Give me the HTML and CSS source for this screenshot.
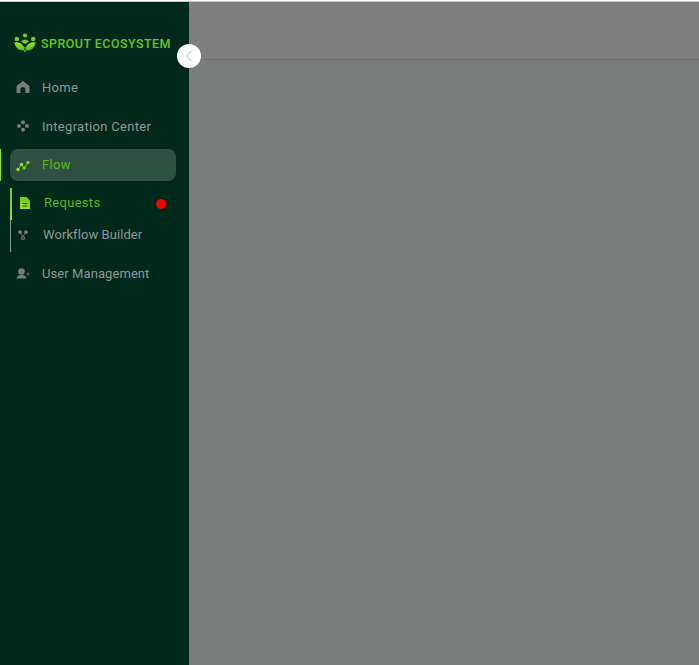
FILE: index.html
```html
<!DOCTYPE html>
<html>
<head>
  <title>Sprout Ecosystem</title>
  <link rel="stylesheet" href="styles.css">
</head>
<body>

  <div class="app">
    <div class="sidebar">
      <div class="brand">
        <svg class="brand-logo" width="22" height="20" viewBox="0 0 22 20">
          <defs>
            <linearGradient id="leaf" x1="0" y1="0" x2="0" y2="1">
              <stop offset="0" stop-color="#9be01a"/>
              <stop offset="1" stop-color="#4fc01a"/>
            </linearGradient>
            <linearGradient id="doc" x1="0" y1="0" x2="0" y2="1">
              <stop offset="0" stop-color="#5fd01c"/>
              <stop offset="1" stop-color="#a6dc10"/>
            </linearGradient>
          </defs>
          <circle cx="11" cy="2.500" r="2.100" fill="#6fd01c"/>
          <circle cx="2.800" cy="6" r="2.200" fill="#6fd01c"/>
          <circle cx="19.200" cy="6" r="2.200" fill="#6fd01c"/>
          <path d="M7 8.500 Q11 4.500 15 8.500 L11 11 Z" fill="#6fd01c"/>
          <path d="M0.300 9.500 Q7 8.500 10.500 14.500 L10.500 17.500 Q2 18 0.300 9.500 Z" fill="url(#leaf)"/>
          <path d="M21.700 9.500 Q15 8.500 11.500 14.500 L11.500 17.500 Q20 18 21.700 9.500 Z" fill="url(#leaf)"/>
          <path d="M9.500 17.300 H12.500 L11 19.800 Z" fill="#4fc01a"/>
        </svg>
        <span class="brand-name">SPROUT ECOSYSTEM</span>
      </div>

      <ul class="nav">
        <li class="nav-item">
          <svg class="icon" width="14" height="14" viewBox="0 0 14 14">
            <path d="M7 1 L13.500 6 V13 H9.500 V9.500 a2.500 2.500 0 0 0 -5 0 V13 H0.500 V6 Z" fill="#7b7b7b"/>
          </svg>
          <span>Home</span>
        </li>
        <li class="nav-item">
          <svg class="icon" width="14" height="14" viewBox="0 0 14 14" fill="#7b7b7b">
            <circle cx="7" cy="3.200" r="2"/>
            <circle cx="3" cy="7" r="2"/>
            <circle cx="11" cy="7" r="2"/>
            <circle cx="7" cy="10.800" r="2"/>
          </svg>
          <span>Integration Center</span>
        </li>
        <li class="nav-item active">
          <svg class="icon" width="14" height="14" viewBox="0 0 14 14">
            <path d="M2 11.500 L5.500 6.500 L8 10 L12 4.500" fill="none" stroke="#6fd01c" stroke-width="1"/>
            <circle cx="2" cy="11.500" r="1.700" fill="#9be01a"/>
            <circle cx="5.500" cy="6.500" r="1.700" fill="#9be01a"/>
            <circle cx="8" cy="10" r="1.700" fill="#6fd01c"/>
            <circle cx="12" cy="4.500" r="1.700" fill="#6fd01c"/>
          </svg>
          <span>Flow</span>
        </li>
      </ul>

      <ul class="subnav">
        <li class="subnav-item current">
          <svg class="icon" width="10" height="12" viewBox="0 0 10 12">
            <path d="M0 0 H6.500 L10 3.500 V12 H0 Z" fill="url(#doc)"/>
            <path d="M2.500 6 H7.500 V7 H2.500 Z M2.500 8.500 H7.500 V9.500 H2.500 Z" fill="#2c4a1a"/>
          </svg>
          <span>Requests</span>
          <i class="dot"></i>
        </li>
        <li class="subnav-item">
          <svg class="icon" width="10" height="10" viewBox="0 0 12 12" fill="#7b7b7b">
            <circle cx="2.500" cy="2.500" r="2.300"/>
            <circle cx="9.500" cy="2.500" r="2.300"/>
            <circle cx="6" cy="9.500" r="1.700" fill="none" stroke="#7b7b7b" stroke-width="1.400"/>
            <path d="M3 4 L6 7 L9 4" fill="none" stroke="#7b7b7b"/>
          </svg>
          <span class="tight">Workflow Builder</span>
        </li>
      </ul>

      <ul class="nav">
        <li class="nav-item user-item">
          <svg class="icon" width="14" height="14" viewBox="0 0 14 14" fill="#7b7b7b">
            <circle cx="5.500" cy="4.500" r="3.300"/>
            <path d="M0.500 11.500 Q1 8 5.500 8 Q10 8 10.500 11.500 Z"/>
            <circle cx="12" cy="7" r="1.500" fill="#5a5f5c"/>
          </svg>
          <span class="tight">User Management</span>
        </li>
      </ul>

      <div class="collapse-btn">
        <svg width="8" height="14" viewBox="0 0 8 14">
          <path d="M7 1.500 L1.500 7 L7 12.500" fill="none" stroke="#a9a9a9" stroke-width="1"/>
        </svg>
      </div>
    </div>

    <div class="main">
      <div class="topbar"></div>
    </div>
  </div>

</body>
</html>
```

FILE: styles.css
```css
html, body {
  height: 100%;
}

body {
  margin: 0;
  font-family: Roboto, Arial, sans-serif;
  background: #ffffff;
  overflow: hidden;
}

.app {
  display: flex;
  height: 664px;
  margin-top: 1px;
  box-sizing: border-box;
  border-top: 1px solid #c4c8c6;
}

.sidebar {
  position: relative;
  width: 189px;
  flex-shrink: 0;
  background: #00281b;
  box-sizing: border-box;
  padding-top: 30px;
}

.brand {
  display: flex;
  align-items: center;
  gap: 5px;
  height: 21px;
  padding-left: 14px;
}

.brand-name {
  padding-top: 1px;
  color: #62c81c;
  font-size: 12.500px;
  font-weight: 500;
  letter-spacing: 0.450px;
  white-space: nowrap;
}

ul {
  list-style-type: none;
  margin: 0;
  padding: 0;
}

.nav {
  padding-top: 18px;
}

.nav + .subnav + .nav {
  padding-top: 6px;
}

.nav-item {
  display: flex;
  align-items: center;
  height: 32px;
  margin: 0 13px 7px 10px;
  padding-left: 6px;
  border-radius: 8px;
  color: #8a9a96;
  font-size: 13px;
  letter-spacing: 0.300px;
}

.nav .icon {
  margin-right: 12px;
  flex-shrink: 0;
}

.active {
  position: relative;
  height: 31px;
  padding-bottom: 1px;
  background: #2f4f42;
  color: #5cb81c;
}

.user-item {
  height: 31px;
  padding-bottom: 1px;
}

.active::before {
  content: "";
  position: absolute;
  left: -10px;
  top: 0;
  width: 1px;
  height: 32px;
  background: #8ee01c;
}

.subnav {
  margin-left: 10px;
}

.subnav-item {
  display: flex;
  align-items: center;
  height: 29px;
  padding: 0 0 3px 7px;
  border-left: 1px solid #8a9a96;
  color: #8a9a96;
  font-size: 13px;
  letter-spacing: 0.300px;
}

.subnav-item .icon {
  margin-right: 15px;
}

.tight {
  letter-spacing: 0.080px;
}

.current {
  padding-left: 8px;
  border-left: 2px solid;
  border-image: linear-gradient(#5fd01c, #a6dc10) 1;
  color: #5cb81c;
}

.current .icon {
  margin-right: 14px;
}

.dot {
  width: 10px;
  height: 10px;
  margin-left: 56px;
  margin-top: 2px;
  border-radius: 50%;
  background: #ff0000;
}

.collapse-btn {
  position: absolute;
  left: 177px;
  top: 42px;
  display: flex;
  align-items: center;
  justify-content: center;
  width: 24px;
  height: 24px;
  border-radius: 50%;
  background: #ffffff;
}

.main {
  flex: 1;
  background: #7b7d7c;
}

.topbar {
  height: 57px;
  background: #7f7f7f;
  border-bottom: 1px solid #6d6f6d;
}
```
